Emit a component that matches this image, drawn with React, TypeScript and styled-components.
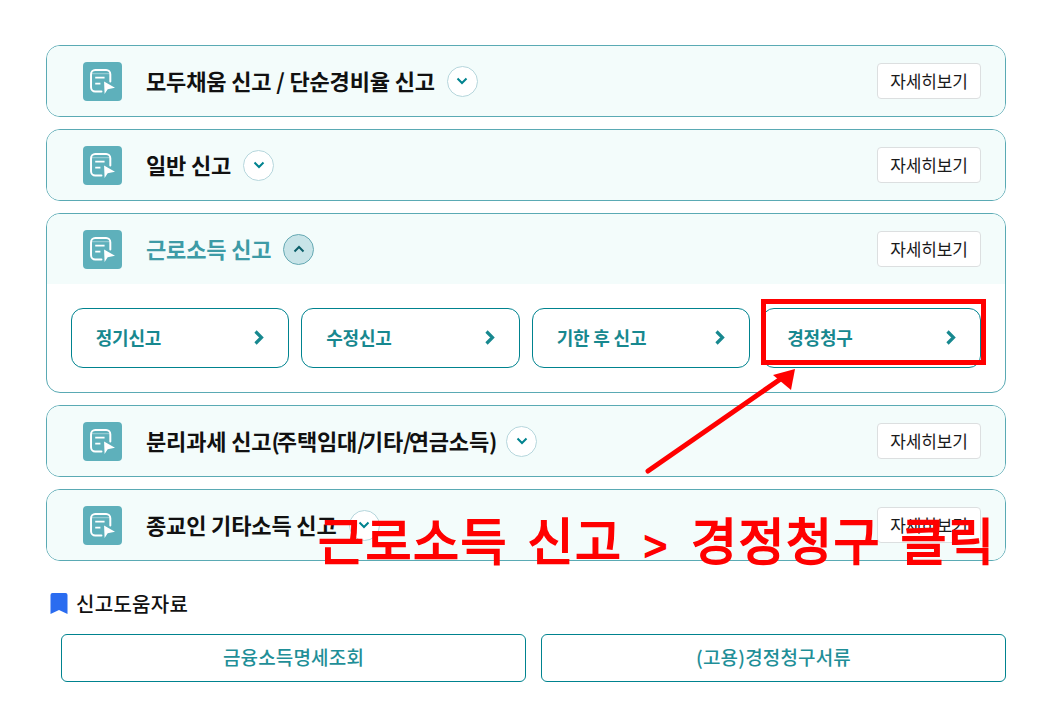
import React from "react";
import styled, { createGlobalStyle } from "styled-components";

const teal = "#00838f";
const fontStack = `"Noto Sans CJK KR", "Noto Sans", sans-serif`;

const GlobalStyle = createGlobalStyle`
  html, body {
    margin: 0;
    background: #fff;
    font-family: ${fontStack};
  }
  * {
    box-sizing: border-box;
  }
`;

const Page = styled.div`
  position: relative;
  width: 1048px;
  height: 707px;
  overflow: hidden;
  padding: 45px 42px 0 46px;
`;

const CardList = styled.div`
  display: flex;
  flex-direction: column;
  gap: 12px;
`;

const Card = styled.section`
  border: 1px solid #5aaab4;
  border-radius: 14px;
  overflow: hidden;
  background: #fff;
`;

const CardHeader = styled.div`
  display: flex;
  align-items: center;
  height: 70px;
  padding: 0 24px 0 36px;
  background: #f3fcfb;
`;

const IconBox = styled.div`
  flex: none;
  width: 39px;
  height: 39px;
  border-radius: 4px;
  background: #5eb0bb;
  margin-right: 24px;
  display: flex;
  align-items: center;
  justify-content: center;
`;

const CardTitle = styled.h3<{ $open: boolean }>`
  margin: 0 0 2px;
  font-size: 22px;
  font-weight: 700;
  letter-spacing: -0.15px;
  line-height: 30px;
  color: ${({ $open }) => ($open ? "#3d9ba6" : "#111")};
`;

// parens and slashes sit tighter than the fallback font sets them
const Punct = styled.span`
  letter-spacing: -2.9px;
`;

const Toggle = styled.span<{ $open: boolean }>`
  flex: none;
  width: 31px;
  height: 31px;
  margin-left: 12px;
  border-radius: 50%;
  display: flex;
  align-items: center;
  justify-content: center;
  border: 1px solid ${({ $open }) => ($open ? "#66a9b3" : "#b5d6dc")};
  background: ${({ $open }) => ($open ? "#c8e4e8" : "#fff")};
`;

const DetailButton = styled.button`
  margin-left: auto;
  width: 104px;
  height: 36px;
  padding: 0 0 2px;
  background: #fff;
  border: 1px solid #dcdfe0;
  border-radius: 4px;
  font-family: ${fontStack};
  font-size: 17px;
  letter-spacing: -0.1px;
  color: #1a1a1a;
`;

const SubGrid = styled.div`
  display: grid;
  grid-template-columns: repeat(4, 1fr);
  gap: 12px;
  padding: 24px 24.3px 24px 23.7px;
`;

const SubButton = styled.a`
  display: flex;
  align-items: center;
  justify-content: space-between;
  height: 60px;
  padding: 0 23px 2px 24px;
  border: 1px solid ${teal};
  border-radius: 12px;
  font-size: 18px;
  font-weight: 700;
  letter-spacing: -0.2px;
  color: #17888f;
`;

const HelpTitle = styled.h4`
  display: flex;
  align-items: center;
  gap: 8px;
  margin: 28px 0 0 4px;
  height: 28px;
  font-size: 20px;
  font-weight: 500;
  letter-spacing: 0.3px;
  color: #111;
`;

const HelpRow = styled.div`
  display: grid;
  grid-template-columns: 1fr 1fr;
  gap: 15px;
  margin: 17px 0 0 15px;
`;

const HelpButton = styled.a`
  display: flex;
  align-items: center;
  justify-content: center;
  height: 48px;
  padding-bottom: 3px;
  border: 1px solid ${teal};
  border-radius: 6px;
  font-size: 19px;
  font-weight: 500;
  letter-spacing: 0.15px;
  color: #1f8f98;
`;

const RedBox = styled.div`
  position: absolute;
  left: 761px;
  top: 299px;
  width: 225px;
  height: 66px;
  border: 5px solid #ff0000;
`;

const ArrowLayer = styled.svg`
  position: absolute;
  left: 0;
  top: 0;
  pointer-events: none;
`;

const Annotation = styled.div`
  position: absolute;
  left: 318px;
  top: 510px;
  font-family: "Liberation Sans", ${fontStack};
  font-size: 50px;
  line-height: 66px;
  font-weight: 400;
  letter-spacing: 1.5px;
  word-spacing: 4px;
  white-space: pre;
  color: #ff0000;
  -webkit-text-stroke: 1.8px #ff0000;
`;

const Gt = styled.span`
  font-size: 40px;
  margin: 0 3px 0 2px;
`;

const ReportIcon = () => (
  <svg width="25" height="25" viewBox="0 0 24 24" fill="none">
    <path
      d="M11 21.5H5a4 4 0 0 1-4-4V5a4 4 0 0 1 4-4h10.5a4 4 0 0 1 4 4v7"
      stroke="#fff"
      strokeWidth="1.9"
      strokeLinecap="round"
    />
    <path d="M1.5 4.5h17.5" stroke="#fff" strokeWidth="0.8" opacity="0.5" />
    <path d="M5 8.3h9M5 14h5" stroke="#fff" strokeWidth="1.6" />
    <path d="M13.5 12 24 18l-7 1.5-3 4.5z" fill="#fff" />
  </svg>
);

const Chevron = ({ up }: { up?: boolean }) => (
  <svg width="12" height="8" viewBox="0 0 12 8" fill="none">
    <path
      d={up ? "M1.5 6.5 6 2l4.5 4.5" : "M1.5 1.5 6 6l4.5-4.5"}
      stroke={up ? "#0d5f6a" : teal}
      strokeWidth="2"
    />
  </svg>
);

const ChevronRight = () => (
  <svg width="11" height="15" viewBox="0 0 11 15" fill="none">
    <path d="M1.5 1.5 7.5 7.5 1.5 13.5" stroke="#17888f" strokeWidth="3.2" />
  </svg>
);

const subItems = ["정기신고", "수정신고", "기한 후 신고", "경정청구"];

const cards = [
  { key: "simple", title: "모두채움 신고 / 단순경비율 신고", open: false },
  { key: "general", title: "일반 신고", open: false },
  { key: "earned", title: "근로소득 신고", open: true },
  {
    key: "separate",
    title: (
      <>
        분리과세 신고<Punct>(</Punct>주택임대<Punct>/</Punct>기타<Punct>/</Punct>
        연금소득<Punct>)</Punct>
      </>
    ),
    open: false,
  },
  { key: "religious", title: "종교인 기타소득 신고", open: false },
];

const App = () => {
  return (
    <Page>
      <GlobalStyle />
      <CardList>
        {cards.map((card) => (
          <Card key={card.key}>
            <CardHeader>
              <IconBox>
                <ReportIcon />
              </IconBox>
              <CardTitle $open={card.open}>{card.title}</CardTitle>
              <Toggle $open={card.open}>
                <Chevron up={card.open} />
              </Toggle>
              <DetailButton>자세히보기</DetailButton>
            </CardHeader>
            {card.open && (
              <SubGrid>
                {subItems.map((item) => (
                  <SubButton key={item}>
                    {item}
                    <ChevronRight />
                  </SubButton>
                ))}
              </SubGrid>
            )}
          </Card>
        ))}
      </CardList>

      <HelpTitle>
        <svg width="18" height="21" viewBox="0 0 18 21">
          <path
            d="M2.5 0h13A2 2 0 0 1 17.5 2v19L9 17 .5 21V2a2 2 0 0 1 2-2z"
            fill="#2a6cf0"
          />
        </svg>
        신고도움자료
      </HelpTitle>
      <HelpRow>
        <HelpButton>금융소득명세조회</HelpButton>
        <HelpButton>(고용)경정청구서류</HelpButton>
      </HelpRow>

      <RedBox />
      <ArrowLayer width="1048" height="707" viewBox="0 0 1048 707">
        <path d="M648 471 782 378" stroke="#ff0000" strokeWidth="5" strokeLinecap="round" />
        <path d="M795 369 773 375 791 390z" fill="#ff0000" />
      </ArrowLayer>
      <Annotation>
        근로소득 신고 <Gt>&gt;</Gt> 경정청구 클릭
      </Annotation>
    </Page>
  );
};

export default App;
